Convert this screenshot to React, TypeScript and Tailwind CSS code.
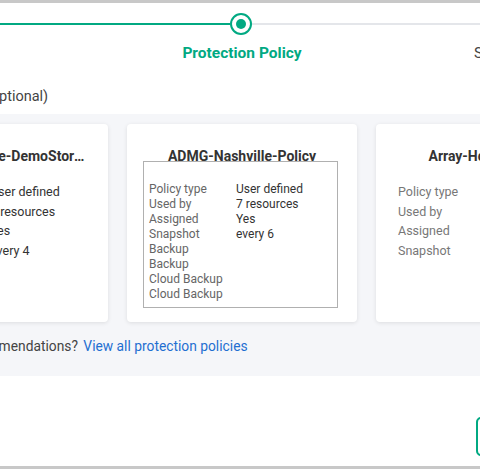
import { ReactNode } from "react";

type Row = { label: string; value: string };

const rowsA: Row[] = [
  { label: "Policy type", value: "User defined" },
  { label: "Used by", value: "7 resources" },
  { label: "Assigned", value: "Yes" },
  { label: "Snapshot", value: "every 4" },
];

const rowsC: Row[] = [
  { label: "Policy type", value: "User defined" },
  { label: "Used by", value: "3 resources" },
  { label: "Assigned", value: "Yes" },
  { label: "Snapshot", value: "every 1" },
];

const tipRows: Row[] = [
  { label: "Policy type", value: "User defined" },
  { label: "Used by", value: "7 resources" },
  { label: "Assigned", value: "Yes" },
  { label: "Snapshot", value: "every 6" },
  { label: "Backup", value: "" },
  { label: "Backup", value: "" },
  { label: "Cloud Backup", value: "" },
  { label: "Cloud Backup", value: "" },
];

function PolicyCard({ title, rows, children }: { title: string; rows: Row[]; children?: ReactNode }) {
  return (
    <div className="relative w-[230px] h-[198px] shrink-0 bg-white rounded-[4px] shadow-[0_1px_4px_rgba(0,0,0,0.10)]">
      <div className="px-[23px] pt-[22px] text-center text-[14px] leading-[20px] font-bold text-[#333] truncate">
        {title}
      </div>
      <div className="mt-[16px] px-[22px]">
        {rows.map((r) => (
          <div key={r.label} className="flex text-[12.5px] leading-[19.5px]">
            <span className="w-[90px] shrink-0 text-[#777]">{r.label}</span>
            <span className="text-[#333]">{r.value}</span>
          </div>
        ))}
      </div>
      {children}
    </div>
  );
}

// hover details box that covers the middle card's own rows
function PolicyTooltip() {
  return (
    <div className="absolute left-[16px] top-[37px] w-[195px] h-[147px] bg-white border border-[#b0b0b0] px-[5px] pt-[20px]">
      {tipRows.map((r, i) => (
        <div key={i} className="flex text-[12px] leading-[15px]">
          <span className="w-[87px] shrink-0 text-[#666]">{r.label}</span>
          <span className="text-[#333]">{r.value}</span>
        </div>
      ))}
    </div>
  );
}

export default function App() {
  return (
    <div
      className="w-[480px] h-[469px] overflow-hidden bg-white border-y-[3px] border-[#c8c8c8] flex flex-col"
      style={{ fontFamily: "Roboto, 'Noto Sans', sans-serif" }}
    >
      {/* stepper */}
      <div className="flex items-center mt-[10px] h-[22px]">
        <div className="w-[230px] h-[2px] bg-[#01a982] shrink-0" />
        <div className="w-[22px] h-[22px] rounded-full border-[2.5px] border-[#01a982] flex items-center justify-center shrink-0">
          <div className="w-[10px] h-[10px] rounded-full bg-[#01a982]" />
        </div>
        <div className="flex-1 h-[2px] bg-[#e4e6ea]" />
      </div>
      <div className="flex mt-[7px] ml-[110px] whitespace-nowrap">
        <div className="w-[264px] shrink-0 text-center text-[15.5px] leading-[22px] font-bold text-[#01a982]">
          Protection Policy
        </div>
        <div className="w-[264px] shrink-0 text-center text-[15px] leading-[22px] text-[#444]">
          Summary
        </div>
      </div>

      <div className="mt-[23px] ml-[-180px] whitespace-nowrap text-[14.5px] leading-[20px] text-[#444]">
        Select a protection policy (optional)
      </div>

      {/* recommendations panel */}
      <div className="mt-[7px] h-[262px] bg-[#f5f6f9] flex flex-col">
        <div className="flex gap-[19px] ml-[-122px] pt-[10px]">
          <PolicyCard title="Tier10-Nashville-DemoStorage-Policy" rows={rowsA} />
          <PolicyCard title="ADMG-Nashville-Policy" rows={[]}>
            <PolicyTooltip />
          </PolicyCard>
          <PolicyCard title="Array-Hourly-Policy" rows={rowsC} />
        </div>
        <div className="mt-[14px] ml-[-110px] whitespace-nowrap text-[13.8px] leading-[20px]">
          <span className="text-[#444]">Not seeing recommendations?</span>{" "}
          <a className="text-[#1f6fd1] ml-[2px]">View all protection policies</a>
        </div>
      </div>

      {/* footer */}
      <div className="flex-1 flex items-start pt-[41px] pl-[476px]">
        <button className="w-[90px] h-[39px] shrink-0 rounded-[5px] border-2 border-[#01a982] text-[#01a982] text-[14px] font-bold">
          Next
        </button>
      </div>
    </div>
  );
}
